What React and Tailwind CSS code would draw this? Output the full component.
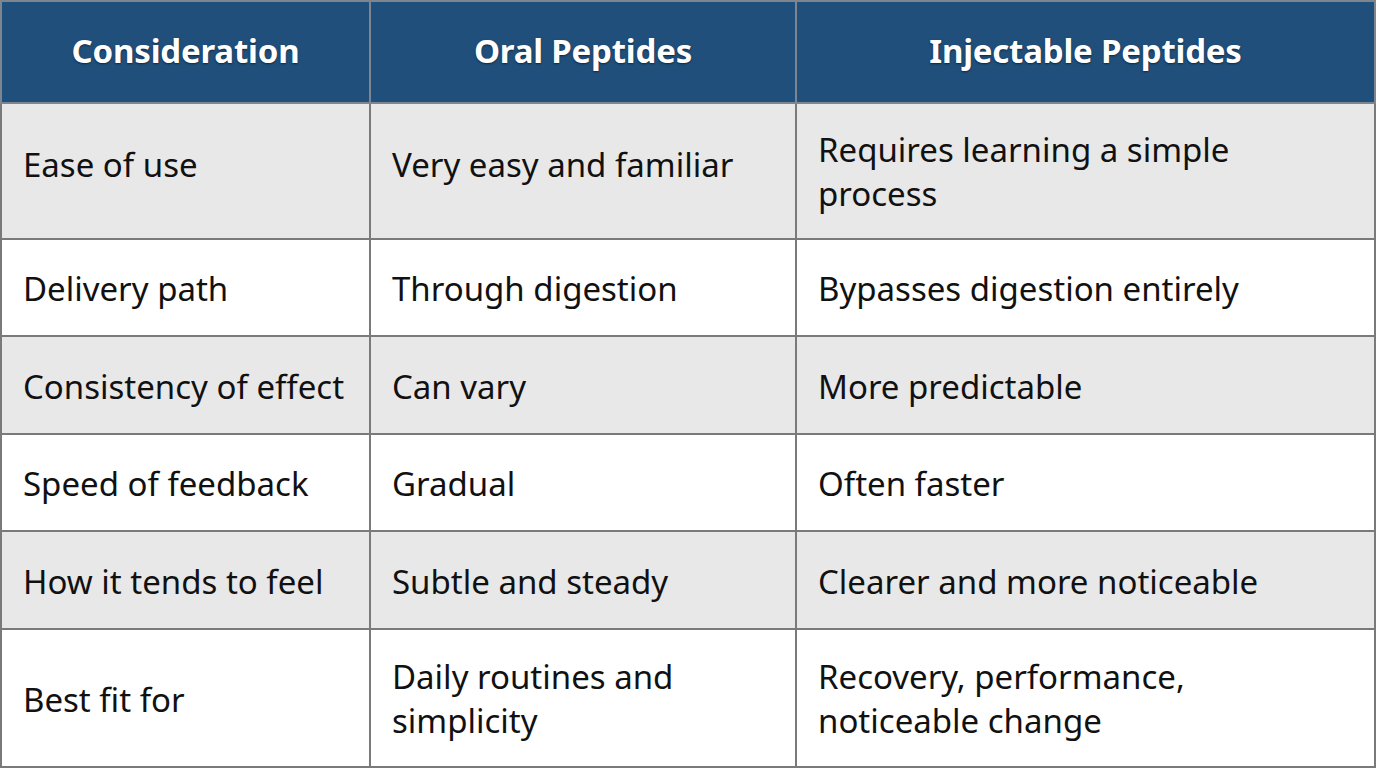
import React from "react";

const rows = [
  ["Ease of use", "Very easy and familiar", ["Requires learning a simple", "process"], "h-[136px]", true],
  ["Delivery path", "Through digestion", "Bypasses digestion entirely", "h-[97px]", false],
  ["Consistency of effect", "Can vary", "More predictable", "h-[98px]", true],
  ["Speed of feedback", "Gradual", "Often faster", "h-[97px]", false],
  ["How it tends to feel", "Subtle and steady", "Clearer and more noticeable", "h-[98px]", true],
  ["Best fit for", ["Daily routines and", "simplicity"], ["Recovery, performance,", "noticeable change"], "h-[138px]", false],
];

function Cell({ t }) {
  if (Array.isArray(t)) {
    return (
      <>
        {t[0]}
        <br />
        {t[1]}
      </>
    );
  }
  return t;
}

export default function App() {
  return (
    <div className="w-[1376px] h-[768px] bg-white overflow-hidden" style={{ fontFamily: '"Noto Sans", "Liberation Sans", sans-serif' }}>
      <table className="w-[1376px] border-collapse table-fixed">
        <colgroup>
          <col className="w-[369px]" />
          <col className="w-[426px]" />
          <col />
        </colgroup>
        <thead>
          <tr className="h-[102px] bg-[#204f7b]">
            {["Consideration", "Oral Peptides", "Injectable Peptides"].map((h) => (
              <th key={h} className="border-2 border-[#7d8690] text-white font-bold text-[33px] tracking-[-0.2px] text-center pb-[3px] [text-shadow:0_1px_2px_rgba(0,0,0,0.5)]">
                {h}
              </th>
            ))}
          </tr>
        </thead>
        <tbody>
          {rows.map(([a, b, c, h, shade], ri) => (
            <tr key={a} className={`${h} ${shade ? "bg-[#e8e8e8]" : "bg-white"}`}>
              {[a, b, c].map((t, i) => (
                <td
                  key={i}
                  className={`border-2 border-[#7a7a7a] pl-[21px] pr-[10px] text-[33px] leading-[44px] text-[#111] align-middle whitespace-nowrap ${
                    ri === 0 && !Array.isArray(t) ? "pb-[12px]" : Array.isArray(t) ? "pt-[2px]" : "pt-[3px]"
                  }`}
                >
                  <Cell t={t} />
                </td>
              ))}
            </tr>
          ))}
        </tbody>
      </table>
    </div>
  );
}
